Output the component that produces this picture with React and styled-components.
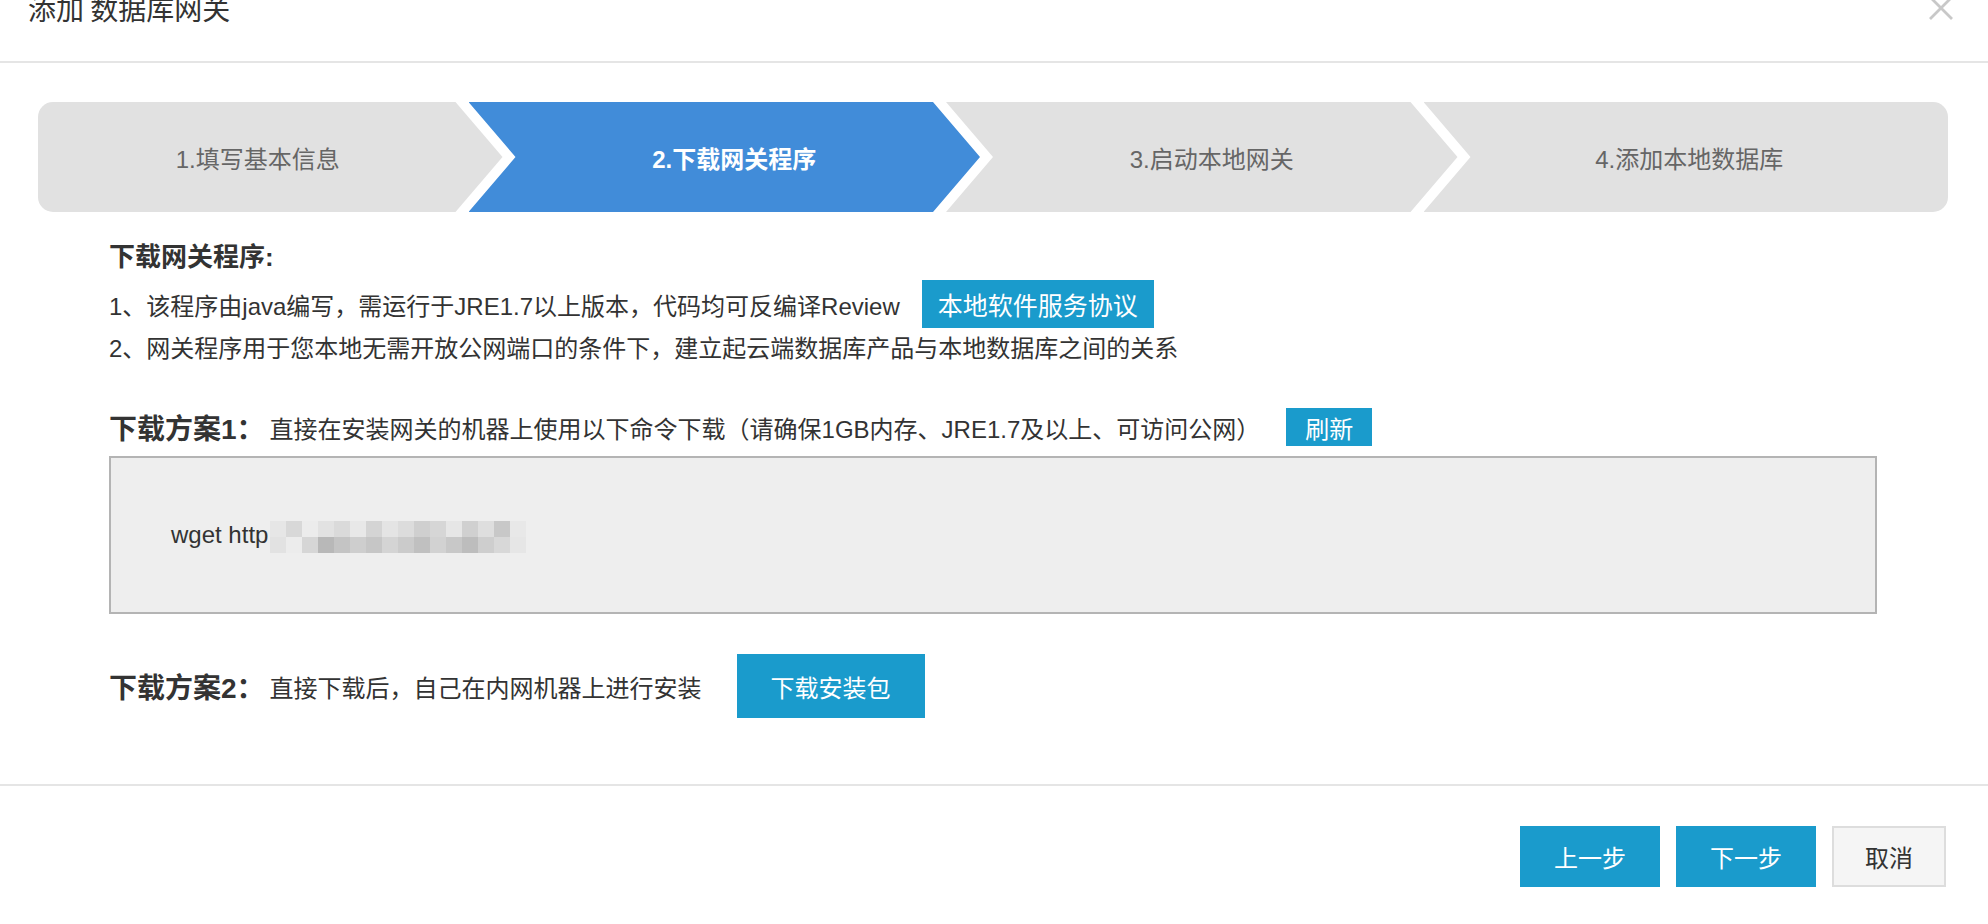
import styled, { createGlobalStyle } from "styled-components";

const GlobalStyle = createGlobalStyle`
	body {
		margin: 0;
		background: #ffffff;
		font-family: "Liberation Sans", "Noto Sans CJK SC", sans-serif;
		color: #333333;
	}
`;

const steps = ["1.填写基本信息", "2.下载网关程序", "3.启动本地网关", "4.添加本地数据库"];

// 马赛克遮挡的下载地址
const mosaic = [
	["#e6e6e6", "#d8d8d8", "#ececec", "#e2e2e2", "#dadada", "#e8e8e8", "#d4d4d4", "#e4e4e4", "#dcdcdc", "#cfcfcf", "#d6d6d6", "#e6e6e6", "#d0d0d0", "#dedede", "#c8c8c8", "#e8e8e8"],
	["#e2e2e2", "#ececec", "#d6d6d6", "#b8b8b8", "#c4c4c4", "#cecece", "#c6c6c6", "#d4d4d4", "#cbcbcb", "#c0c0c0", "#d2d2d2", "#c8c8c8", "#bdbdbd", "#cecece", "#d8d8d8", "#e6e6e6"],
];

function App() {
	return (
		<>
			<GlobalStyle />
			<Modal>
				<Header>
					<Title>添加 数据库网关</Title>
					<Close>
						<svg width="26" height="26" viewBox="0 0 26 26">
							<path d="M2 2 L24 24 M24 2 L2 24" stroke="#c8c8c8" strokeWidth="2.8" />
						</svg>
					</Close>
				</Header>

				<Stepper>
					{steps.map((s, i) => (
						<Step
							key={s}
							$pos={i === 0 ? "first" : i === steps.length - 1 ? "last" : "middle"}
							$active={i === 1}
						>
							{s}
						</Step>
					))}
				</Stepper>

				<Content>
					<Heading>下载网关程序:</Heading>
					<Line $mt={5} $h={48}>
						1、该程序由java编写，需运行于JRE1.7以上版本，代码均可反编译Review
						<BlueButton $w={232} $h={48} $size={25} $ml={22}>
							本地软件服务协议
						</BlueButton>
					</Line>
					<Line $mt={0} $h={37}>
						2、网关程序用于您本地无需开放公网端口的条件下，建立起云端数据库产品与本地数据库之间的关系
					</Line>

					<PlanRow $mt={43} $h={38}>
						<PlanLabel>下载方案1：</PlanLabel>
						<PlanDesc>直接在安装网关的机器上使用以下命令下载（请确保1GB内存、JRE1.7及以上、可访问公网）</PlanDesc>
						<BlueButton $w={86} $h={38} $size={24} $ml={26}>
							刷新
						</BlueButton>
					</PlanRow>

					<CodeBox>
						<Code>wget http</Code>
						<Mosaic>
							{mosaic.map((row, r) =>
								row.map((c, k) => <Cell key={r + "-" + k} $c={c} />)
							)}
						</Mosaic>
					</CodeBox>

					<PlanRow $mt={40} $h={64}>
						<PlanLabel>下载方案2：</PlanLabel>
						<PlanDesc>直接下载后，自己在内网机器上进行安装</PlanDesc>
						<BlueButton $w={188} $h={64} $size={24} $ml={35}>
							下载安装包
						</BlueButton>
					</PlanRow>
				</Content>

				<Footer>
					<FooterButton $primary>上一步</FooterButton>
					<FooterButton $primary>下一步</FooterButton>
					<FooterButton $w={114}>取消</FooterButton>
				</Footer>
			</Modal>
		</>
	);
}

export default App;

const Modal = styled.div`
	width: 1988px;
	height: 924px;
	overflow: hidden;
	display: flex;
	flex-direction: column;
`;

const Header = styled.div`
	height: 61px;
	border-bottom: 2px solid #e5e5e5;
	display: flex;
	justify-content: space-between;
	align-items: flex-start;
	padding: 0 34px 0 28px;
	flex-shrink: 0;
`;

const Title = styled.div`
	font-size: 28px;
	line-height: 28px;
	margin-top: -6px;
	color: #333333;
	font-family: "Noto Sans CJK SC", sans-serif;
`;

const Close = styled.div`
	margin-top: -5px;
	width: 26px;
	height: 26px;
`;

const Stepper = styled.div`
	margin: 39px 40px 0 38px;
	height: 110px;
	border-radius: 15px;
	overflow: hidden;
	display: flex;
	flex-shrink: 0;
`;

const clips = {
	first: "polygon(0 0, calc(100% - 60px) 0, calc(100% - 13px) 50%, calc(100% - 60px) 100%, 0 100%)",
	middle:
		"polygon(0 0, calc(100% - 60px) 0, calc(100% - 13px) 50%, calc(100% - 60px) 100%, 0 100%, 47px 50%)",
	last: "polygon(0 0, 100% 0, 100% 100%, 0 100%, 47px 50%)",
};

const Step = styled.div`
	box-sizing: border-box;
	flex: 0 0 ${(p) => (p.$pos === "first" ? "477.5px" : "524.5px")};
	margin-left: ${(p) => (p.$pos === "first" ? "0" : "-47px")};
	padding: ${(p) => (p.$pos === "first" ? "0 38px 0 0" : "0 40px 0 47px")};
	clip-path: ${(p) => clips[p.$pos]};
	background: ${(p) => (p.$active ? "#418cd9" : "#e1e1e1")};
	color: ${(p) => (p.$active ? "#ffffff" : "#666666")};
	font-weight: ${(p) => (p.$active ? 600 : 400)};
	font-size: 24px;
	display: flex;
	align-items: center;
	justify-content: center;
	white-space: nowrap;
`;

const Content = styled.div`
	padding: 0 111px 0 109px;
	display: flex;
	flex-direction: column;
`;

const Heading = styled.div`
	margin-top: 27px;
	font-size: 26px;
	line-height: 36px;
	font-weight: bold;
	color: #333333;
`;

const Line = styled.div`
	margin-top: ${(p) => p.$mt}px;
	height: ${(p) => p.$h}px;
	display: flex;
	align-items: center;
	font-size: 24px;
	color: #333333;
	white-space: nowrap;
`;

const BlueButton = styled.div`
	width: ${(p) => p.$w}px;
	height: ${(p) => p.$h}px;
	margin-left: ${(p) => p.$ml}px;
	background: #1a9bcc;
	color: #ffffff;
	font-size: ${(p) => p.$size}px;
	display: flex;
	align-items: center;
	justify-content: center;
	flex-shrink: 0;
`;

const PlanRow = styled.div`
	margin-top: ${(p) => p.$mt}px;
	height: ${(p) => p.$h}px;
	display: flex;
	align-items: center;
	white-space: nowrap;
`;

const PlanLabel = styled.span`
	font-size: 28px;
	font-weight: bold;
	color: #333333;
	margin-right: 5px;
`;

const PlanDesc = styled.span`
	font-size: 24px;
	color: #333333;
`;

const CodeBox = styled.div`
	margin-top: 10px;
	height: 154px;
	border: 2px solid #b4b4b4;
	background: #eeeeee;
	display: flex;
	align-items: center;
	padding-left: 60px;
`;

const Code = styled.span`
	font-size: 24px;
	color: #333333;
	font-family: "Liberation Sans", sans-serif;
`;

const Mosaic = styled.div`
	display: grid;
	grid-template-columns: repeat(16, 16px);
	grid-auto-rows: 16px;
	margin-left: 2px;
	margin-top: 4px;
`;

const Cell = styled.span`
	background: ${(p) => p.$c};
`;

const Footer = styled.div`
	margin-top: auto;
	height: 140px;
	border-top: 2px solid #e5e5e5;
	display: flex;
	justify-content: flex-end;
	align-items: flex-start;
	gap: 16px;
	padding: 40px 42px 0 0;
	box-sizing: border-box;
`;

const FooterButton = styled.div`
	width: ${(p) => p.$w || 140}px;
	height: 61px;
	box-sizing: border-box;
	background: ${(p) => (p.$primary ? "#1a9bcc" : "#f5f5f5")};
	border: ${(p) => (p.$primary ? "none" : "2px solid #dddddd")};
	color: ${(p) => (p.$primary ? "#ffffff" : "#333333")};
	font-size: 24px;
	display: flex;
	align-items: center;
	justify-content: center;
`;
